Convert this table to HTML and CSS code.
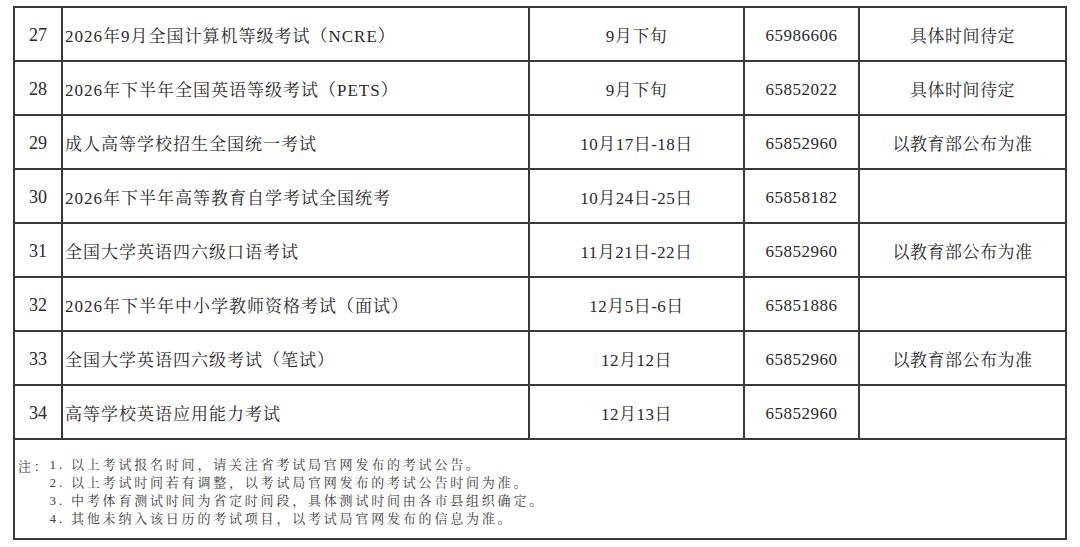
FILE: index.html
```html
<!DOCTYPE html>
<html lang="zh-CN">
<head>
<meta charset="utf-8">
<title>考试日历</title>
<link rel="stylesheet" href="styles.css">
</head>
<body>
<table class="exam">
  <colgroup>
    <col class="c-no">
    <col class="c-name">
    <col class="c-date">
    <col class="c-tel">
    <col class="c-memo">
  </colgroup>
  <tbody>
    <tr><td class="no">27</td><td class="name">2026年9月全国计算机等级考试（NCRE）</td><td class="ctr">9月下旬</td><td class="ctr num">65986606</td><td class="ctr">具体时间待定</td></tr>
    <tr><td class="no">28</td><td class="name">2026年下半年全国英语等级考试（PETS）</td><td class="ctr">9月下旬</td><td class="ctr num">65852022</td><td class="ctr">具体时间待定</td></tr>
    <tr><td class="no">29</td><td class="name">成人高等学校招生全国统一考试</td><td class="ctr">10月17日-18日</td><td class="ctr num">65852960</td><td class="ctr">以教育部公布为准</td></tr>
    <tr><td class="no">30</td><td class="name">2026年下半年高等教育自学考试全国统考</td><td class="ctr">10月24日-25日</td><td class="ctr num">65858182</td><td class="ctr"></td></tr>
    <tr><td class="no">31</td><td class="name">全国大学英语四六级口语考试</td><td class="ctr">11月21日-22日</td><td class="ctr num">65852960</td><td class="ctr">以教育部公布为准</td></tr>
    <tr><td class="no">32</td><td class="name">2026年下半年中小学教师资格考试（面试）</td><td class="ctr">12月5日-6日</td><td class="ctr num">65851886</td><td class="ctr"></td></tr>
    <tr><td class="no">33</td><td class="name">全国大学英语四六级考试（笔试）</td><td class="ctr">12月12日</td><td class="ctr num">65852960</td><td class="ctr">以教育部公布为准</td></tr>
    <tr><td class="no">34</td><td class="name">高等学校英语应用能力考试</td><td class="ctr">12月13日</td><td class="ctr num">65852960</td><td class="ctr"></td></tr>
    <tr class="note-row">
      <td colspan="5" class="note">
        <div class="note-wrap">
          <span class="note-label">注：</span>
          <div class="note-lines">
            <p>1. 以上考试报名时间，请关注省考试局官网发布的考试公告。</p>
            <p>2. 以上考试时间若有调整，以考试局官网发布的考试公告时间为准。</p>
            <p>3. 中考体育测试时间为省定时间段，具体测试时间由各市县组织确定。</p>
            <p>4. 其他未纳入该日历的考试项目，以考试局官网发布的信息为准。</p>
          </div>
        </div>
      </td>
    </tr>
  </tbody>
</table>
</body>
</html>
```
FILE: styles.css
```css
html, body {
  margin: 0;
  padding: 0;
  background: #ffffff;
}

body {
  padding: 6px 0 0 13px;
}

.exam {
  border-collapse: collapse;
  table-layout: fixed;
  width: 1052px;
  font-family: "Liberation Serif", "Noto Serif CJK SC", "Noto Sans CJK SC", serif;
  color: #2a2a2a;
  font-size: 17px;
}

.c-no { width: 48px; }
.c-name { width: 467px; }
.c-date { width: 215px; }
.c-tel { width: 115px; }
.c-memo { width: 207px; }

.exam td {
  border: 2px solid #3a3a3a;
  height: 52px;
  padding: 0;
  vertical-align: middle;
  white-space: nowrap;
}

.exam td.no {
  text-align: center;
  font-size: 18px;
  height: 49px;
  padding-top: 3px;
}

.name {
  padding-left: 2px !important;
  letter-spacing: 1px;
}

.ctr {
  text-align: center;
  letter-spacing: 0.5px;
}

.exam td.num {
  height: 49px;
  padding-top: 3px;
}

.note-row td.note {
  height: auto;
  padding: 16px 0 10px 3px;
  vertical-align: top;
  font-size: 13px;
  color: #3c3c3c;
  letter-spacing: 2.8px;
}

.note-wrap {
  display: flex;
}

.note-label {
  flex: none;
}

.note-lines p {
  margin: 0;
  line-height: 18px;
}
```
